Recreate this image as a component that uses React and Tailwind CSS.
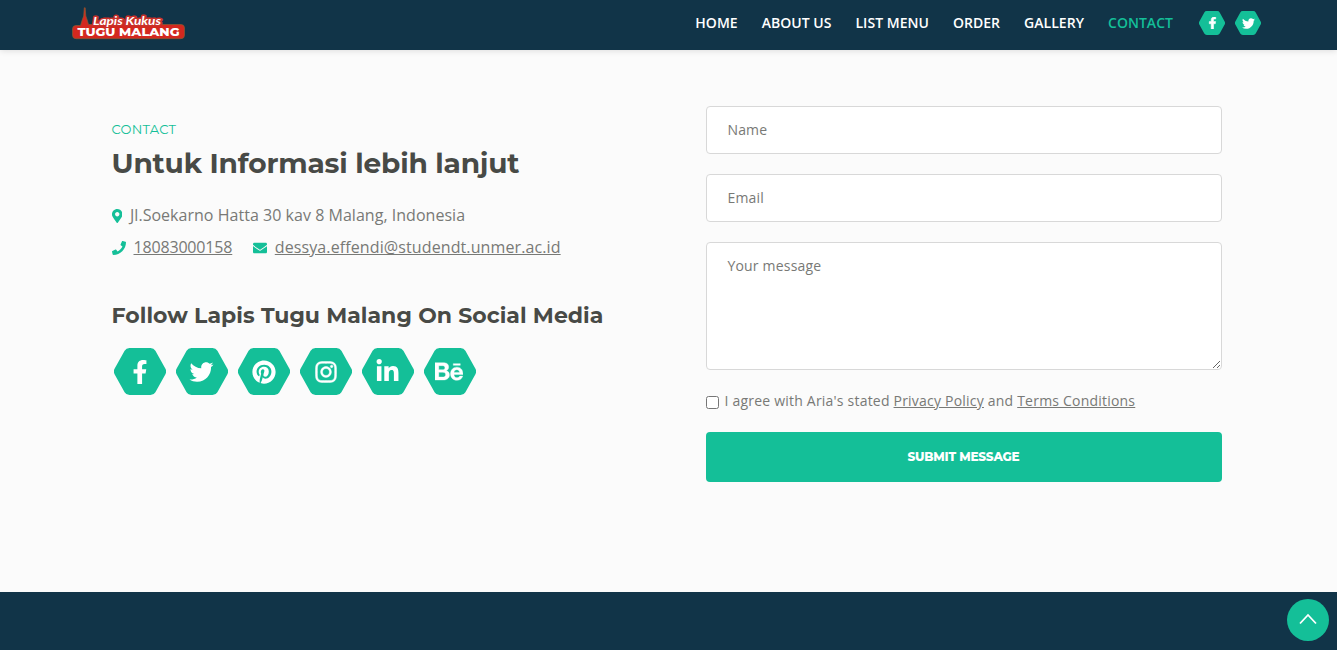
import React from "react";
import {
  FaFacebookF,
  FaTwitter,
  FaPinterest,
  FaInstagram,
  FaLinkedinIn,
  FaBehance,
  FaMapMarkerAlt,
  FaPhone,
  FaEnvelope,
} from "react-icons/fa";

const links = ["HOME", "ABOUT US", "LIST MENU", "ORDER", "GALLERY"];

const socials = [
  { name: "Facebook", Icon: FaFacebookF, size: "mr-px h-6 w-6" },
  { name: "Twitter", Icon: FaTwitter, size: "mr-0.5 h-6 w-[25px]" },
  { name: "Pinterest", Icon: FaPinterest, size: "mr-px h-6 w-6" },
  { name: "Instagram", Icon: FaInstagram, size: "mr-px h-6 w-6 stroke-white stroke-[10px]" },
  { name: "LinkedIn", Icon: FaLinkedinIn, size: "mr-px h-[25px] w-[25px]" },
  { name: "Behance", Icon: FaBehance, size: "mr-0.5 h-[25px] w-[28px] stroke-white stroke-[8px]" },
];

function Hexagon({ className, children }) {
  return (
    <span className={`grid shrink-0 place-items-center text-white ${className}`}>
      <svg viewBox="0 0 52 47" className="col-start-1 row-start-1 h-full w-full" preserveAspectRatio="none">
        <path
          fill="#14bf98"
          d="M15.5 0H36.5Q39.8 0 41.4 2.8L51.3 20.5Q53 23.5 51.3 26.5L41.4 44.2Q39.8 47 36.5 47H15.5Q12.2 47 10.6 44.2L.7 26.5Q-1 23.5 .7 20.5L10.6 2.8Q12.2 0 15.5 0Z"
        />
      </svg>
      <span className="col-start-1 row-start-1">{children}</span>
    </span>
  );
}

function Logo() {
  return (
    <svg width="115" height="34" viewBox="0 0 115 34" aria-label="Lapis Kukus Tugu Malang">
      <path
        d="M5 18.500H9.500L11.200 13L12.700 9L13.300 .8H14.200L14.800 9L16.200 13L17.500 17.500H20.500L25 13.500H89.500L91 17.500H110Q113.500 17.500 113.500 21V28Q113.500 31.700 110 31.700H5Q1.500 31.700 1.500 28V22Q1.500 18.500 5 18.500Z"
        fill="#d3281f"
        stroke="#8a5a31"
        strokeWidth="0.7"
      />
      <text x="22" y="17.800" fill="#fff" stroke="#c9302a" strokeWidth="3" strokeLinejoin="round" paintOrder="stroke" textLength="68" lengthAdjust="spacingAndGlyphs" fontFamily="Lato, sans-serif" fontSize="10.500" fontWeight="700" fontStyle="italic">
        Lapis Kukus
      </text>
      <text x="6.500" y="28.600" fill="#fff" textLength="102" lengthAdjust="spacingAndGlyphs" fontFamily="Montserrat, Inter, sans-serif" fontSize="11.500" fontWeight="800">
        TUGU MALANG
      </text>
    </svg>
  );
}

export default function App() {
  return (
    <div className="flex h-[650px] w-full flex-col overflow-hidden bg-[#fbfbfb] font-['Open_Sans',sans-serif] text-[#787976]">
      <header className="z-10 flex h-[50px] shrink-0 items-start justify-between bg-[#113448] pl-[71px] pr-[76px] shadow-[0_1px_6px_rgba(0,0,0,0.12)]">
        <a href="#home" className="pt-[7px]">
          <Logo />
        </a>
        <div className="flex pt-[11px]">
          <nav className="flex gap-6 text-sm/6 font-semibold tracking-[0.03px] text-white">
            {links.map((l) => (
              <a key={l} href="#section">{l}</a>
            ))}
            <a href="#contact" className="text-[#14bf98]">CONTACT</a>
          </nav>
          <div className="ml-[26px] flex gap-[10px]">
            <Hexagon className="h-6 w-[26px]"><FaFacebookF className="h-3 w-[13px] stroke-white stroke-[24px]" /></Hexagon>
            <Hexagon className="h-6 w-[26px]"><FaTwitter className="h-[13px] w-[13px]" /></Hexagon>
          </div>
        </div>
      </header>

      <main className="flex h-[542px] shrink-0 pl-[111.5px]">
        <section className="w-[594.5px] shrink-0 pt-[67px]">
          <div className="h-6 font-[Montserrat,Inter,sans-serif] text-[13px]/6 tracking-[0.25px] text-[#14bf98]">CONTACT</div>
          <h2 className="mt-[3px] h-[38px] whitespace-nowrap font-[Montserrat,Inter,sans-serif] text-[28px]/[38px] font-bold tracking-[-0.17px] text-[#484a46]">
            Untuk Informasi lebih lanjut
          </h2>
          <ul className="mt-[17px] text-base/8">
            <li className="flex items-center tracking-[0.03px]">
              <FaMapMarkerAlt className="mr-[8px] mt-px h-[14px] w-[10.5px] text-[#14bf98]" />
              Jl.Soekarno Hatta 30 kav 8 Malang, Indonesia
            </li>
            <li className="flex items-center">
              <FaPhone className="mr-2 mt-px h-[14px] w-[14px] text-[#14bf98]" />
              <a href="#phone" className="tracking-[-0.17px] underline">18083000158</a>
              <FaEnvelope className="ml-[20.5px] mr-2 mt-px h-[14px] w-[14px] text-[#14bf98]" />
              <a href="#mail" className="tracking-[0.11px] underline">dessya.effendi@studendt.unmer.ac.id</a>
            </li>
          </ul>
          <h3 className="mt-[38px] h-[30px] whitespace-nowrap font-[Montserrat,Inter,sans-serif] text-[22px]/[30px] font-bold tracking-[0.03px] text-[#484a46]">
            Follow Lapis Tugu Malang On Social Media
          </h3>
          <div className="ml-[2.5px] mt-[17px] flex gap-[10px]">
            {socials.map(({ name, Icon, size }) => (
              <a key={name} href="#social" aria-label={name}>
                <Hexagon className="h-[47px] w-[52px]"><Icon className={size} /></Hexagon>
              </a>
            ))}
          </div>
        </section>

        <form className="flex w-[516px] flex-col pt-[56px] text-sm">
          <input placeholder="Name" className="mb-5 h-12 rounded border border-[#d8d8d8] bg-white px-[20.5px] pb-[2px] tracking-[0.12px] placeholder:text-[#787976]" />
          <input placeholder="Email" className="mb-5 h-12 rounded border border-[#d8d8d8] bg-white px-[20.5px] pb-[2px] tracking-[0.18px] placeholder:text-[#787976]" />
          <textarea placeholder="Your message" className="h-32 resize rounded border border-[#d8d8d8] bg-white px-[20.5px] py-[13px] tracking-[0.18px] placeholder:text-[#787976]" />
          <div className="mt-5 flex h-[22px] items-center whitespace-pre tracking-[0.21px]">
            <input type="checkbox" className="mr-[5.5px] mt-[3px] h-[13px] w-[13px]" />
            <span>I agree with Aria's stated <a href="#privacy" className="underline">Privacy Policy</a> and <a href="#terms" className="underline">Terms Conditions</a></span>
          </div>
          <button type="button" className="mt-5 h-[50px] rounded bg-[#14bf98] pr-px font-[Montserrat,Inter,sans-serif] text-xs font-extrabold tracking-[-0.2px] text-white">
            SUBMIT MESSAGE
          </button>
        </form>
      </main>

      <footer className="flex h-[58px] shrink-0 items-start justify-end bg-[#113448] pr-2 pt-[7px]">
        <a href="#top" aria-label="Back to top" className="flex h-[42px] w-[42px] items-center justify-center rounded-full bg-[#14bf98] pb-[2px]">
          <svg width="18" height="12" viewBox="0 0 18 12" fill="none" stroke="#fff" strokeWidth="1.8">
            <path d="M1 10.500L9 2L17 10.500" />
          </svg>
        </a>
      </footer>
    </div>
  );
}
